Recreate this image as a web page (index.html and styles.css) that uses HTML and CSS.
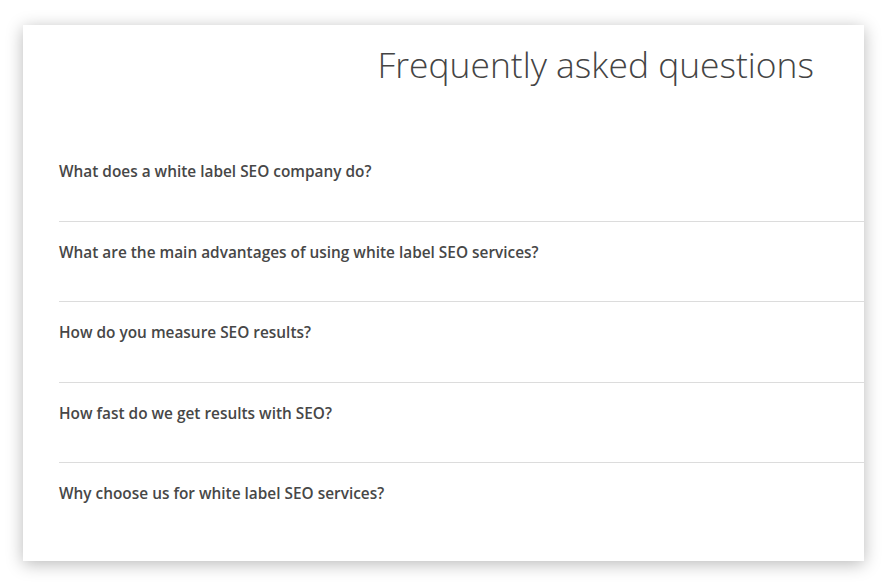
FILE: index.html
```html
<!DOCTYPE html>
<html>
<head>
<meta charset="utf-8">
<link rel="stylesheet" href="styles.css">
</head>
<body>
<div class="card">
  <h1 class="title">Frequently asked questions</h1>
  <ul class="faq">
    <li class="item">What does a white label SEO company do?</li>
    <li class="item">What are the main advantages of using white label SEO services?</li>
    <li class="item">How do you measure SEO results?</li>
    <li class="item">How fast do we get results with SEO?</li>
    <li class="item last">Why choose us for white label SEO services?</li>
  </ul>
</div>
</body>
</html>
```
FILE: styles.css
```css
html, body {
  margin: 0;
  padding: 0;
  background: #ffffff;
}
body {
  padding: 25px 24px 23px 23px;
  font-family: "Open Sans", "Liberation Sans", sans-serif;
}
.card {
  width: 841px;
  height: 536px;
  box-sizing: border-box;
  background: #ffffff;
  box-shadow: 0 3px 16px rgba(0, 0, 0, 0.28);
  padding: 18px 0 0 36px;
}
.title {
  margin: 0;
  padding-right: 50px;
  text-align: right;
  font-weight: 300;
  font-size: 35.4px;
  line-height: 43px;
  color: #444444;
}
.faq {
  list-style: none;
  margin: 55px 0 0 0;
  padding: 0;
}
.item {
  font-size: 15.4px;
  font-weight: 600;
  line-height: 22px;
  color: #474747;
  padding: 20px 0 37.5px 0;
  border-bottom: 1px solid #dcdcdc;
}
.item.last {
  border-bottom: none;
}
```
